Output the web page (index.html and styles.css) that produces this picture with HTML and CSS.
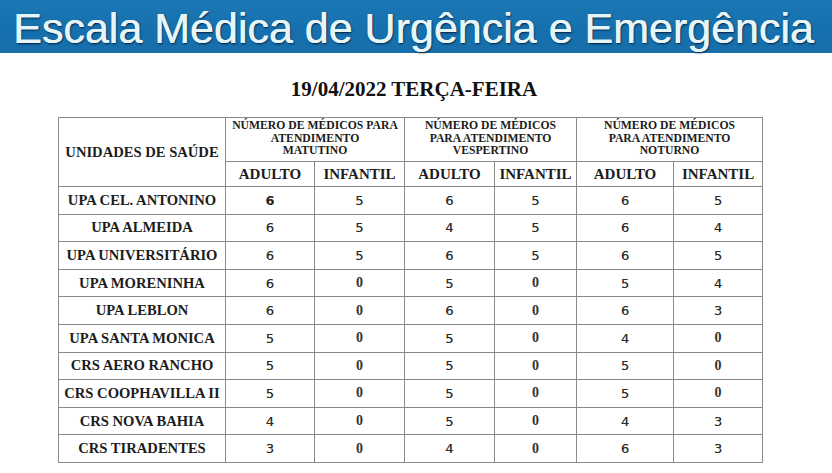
FILE: index.html
```html
<!DOCTYPE html>
<html lang="pt-BR">
<head>
<meta charset="utf-8">
<title>Escala Médica de Urgência e Emergência</title>
<link rel="stylesheet" href="styles.css">
</head>
<body>
<header class="banner"><h1 class="banner-title">Escala Médica de Urgência e Emergência</h1></header>
<main class="page">
  <h2 class="date">19/04/2022 TERÇA-FEIRA</h2>
  <table class="scale">
    <colgroup>
      <col class="c-unit"><col class="c-a1"><col class="c-i1"><col class="c-a2"><col class="c-i2"><col class="c-a3"><col class="c-i3">
    </colgroup>
    <thead>
      <tr class="h1">
        <th rowspan="2" class="unit-head">UNIDADES DE SAÚDE</th>
        <th colspan="2" class="group">NÚMERO DE MÉDICOS PARA<br>ATENDIMENTO<br>MATUTINO</th>
        <th colspan="2" class="group">NÚMERO DE MÉDICOS<br>PARA ATENDIMENTO<br>VESPERTINO</th>
        <th colspan="2" class="group">NÚMERO DE MÉDICOS<br>PARA ATENDIMENTO<br>NOTURNO</th>
      </tr>
      <tr class="h2">
        <th>ADULTO</th><th>INFANTIL</th><th>ADULTO</th><th>INFANTIL</th><th>ADULTO</th><th>INFANTIL</th>
      </tr>
    </thead>
    <tbody>
      <tr><th>UPA CEL. ANTONINO</th><td class="strong">6</td><td>5</td><td>6</td><td>5</td><td>6</td><td>5</td></tr>
      <tr><th>UPA ALMEIDA</th><td>6</td><td>5</td><td>4</td><td>5</td><td>6</td><td>4</td></tr>
      <tr><th>UPA UNIVERSITÁRIO</th><td>6</td><td>5</td><td>6</td><td>5</td><td>6</td><td>5</td></tr>
      <tr><th>UPA MORENINHA</th><td>6</td><td class="serif">0</td><td>5</td><td class="serif">0</td><td>5</td><td>4</td></tr>
      <tr><th>UPA LEBLON</th><td>6</td><td class="serif">0</td><td>6</td><td class="serif">0</td><td>6</td><td>3</td></tr>
      <tr><th>UPA SANTA MONICA</th><td>5</td><td class="serif">0</td><td>5</td><td class="serif">0</td><td>4</td><td class="serif">0</td></tr>
      <tr><th>CRS AERO RANCHO</th><td>5</td><td class="serif">0</td><td>5</td><td class="serif">0</td><td>5</td><td class="serif">0</td></tr>
      <tr><th>CRS COOPHAVILLA II</th><td>5</td><td class="serif">0</td><td>5</td><td class="serif">0</td><td>5</td><td class="serif">0</td></tr>
      <tr><th>CRS NOVA BAHIA</th><td>4</td><td class="serif">0</td><td>5</td><td class="serif">0</td><td>4</td><td>3</td></tr>
      <tr><th>CRS TIRADENTES</th><td>3</td><td class="serif">0</td><td>4</td><td class="serif">0</td><td>6</td><td>3</td></tr>
    </tbody>
  </table>
</main>
</body>
</html>
```
FILE: styles.css
```css
html, body {
  margin: 0;
  padding: 0;
  background: #ffffff;
}

.banner {
  height: 53px;
  background: linear-gradient(#1b78b4, #1670ad 60%, #176fab);
  display: flex;
  align-items: center;
  padding-left: 13px;
  box-sizing: border-box;
}

.banner-title {
  margin: 0;
  font-family: "Liberation Sans", Arial, sans-serif;
  font-weight: normal;
  font-size: 43px;
  line-height: 1;
  color: #e6f6f8;
  text-shadow: 0.5px 0 0 #e6f6f8, 1px 1px 2px rgba(0, 20, 50, 0.9);
  white-space: nowrap;
  transform: translateY(2px);
}

.page {
  padding: 0 0 0 58px;
}

.date {
  margin: 24px 0 0 0;
  width: 712px;
  text-align: center;
  font-family: "Liberation Serif", "Times New Roman", serif;
  font-weight: bold;
  font-size: 21px;
  line-height: 24px;
  color: #111;
}

.scale {
  margin-top: 16px;
  border-collapse: collapse;
  width: 704px;
  table-layout: fixed;
  font-family: "Liberation Serif", "Times New Roman", serif;
  color: #1a1a1a;
  border: 1px solid #8a8a8a;
}

.c-unit { width: 167px; }
.c-a1 { width: 89px; }
.c-i1 { width: 90px; }
.c-a2 { width: 90px; }
.c-i2 { width: 82px; }
.c-a3 { width: 97px; }
.c-i3 { width: 89px; }

.scale th,
.scale td {
  border: 1px solid #8a8a8a;
  padding: 0;
  text-align: center;
  vertical-align: middle;
}

.scale th {
  font-family: "Liberation Serif", "Times New Roman", serif;
  font-weight: bold;
  font-size: 14.6px;
  white-space: nowrap;
  color: #1c1c1c;
}

.unit-head {
  font-size: 14.8px;
}

.h1 {
  height: 44px;
}

.h1 .group {
  font-size: 11.7px;
  line-height: 12.5px;
  padding-top: 2px;
  vertical-align: top;
}

.h2 {
  height: 25px;
}

.h2 th {
  font-size: 15px;
}

.scale tbody tr {
  height: 27.6px;
}

.scale td {
  font-family: "DejaVu Sans", Verdana, sans-serif;
  font-size: 13px;
  color: #2a2a2a;
  text-shadow: 0.15px 0 0 rgba(42, 42, 42, 0.6);
}

.scale td.strong {
  font-weight: bold;
  color: #222;
  text-shadow: none;
}

.scale td.serif {
  font-family: "Liberation Serif", "Times New Roman", serif;
  font-weight: bold;
  font-size: 14px;
  color: #333;
  text-shadow: none;
}
```
